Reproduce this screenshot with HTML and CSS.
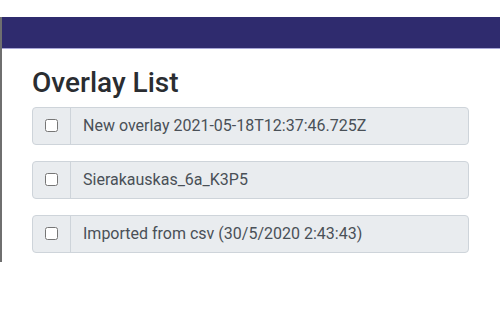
FILE: index.html
```html
<!DOCTYPE html>
<html lang="en">
<head>
    <meta charset="UTF-8">
    <title>Overlay List</title>
    <link rel="stylesheet" href="styles.css">
</head>
<body>
    <div class="frame">
        <div class="navbar"></div>
        <div class="content">
            <h2 class="title">Overlay List</h2>
            <div class="overlay-list">
                <div class="input-group">
                    <div class="addon"><input type="checkbox"></div>
                    <div class="field">New overlay 2021-05-18T12:37:46.725Z</div>
                </div>
                <div class="input-group">
                    <div class="addon"><input type="checkbox"></div>
                    <div class="field">Sierakauskas_6a_K3P5</div>
                </div>
                <div class="input-group">
                    <div class="addon"><input type="checkbox"></div>
                    <div class="field">Imported from csv (30/5/2020 2:43:43)</div>
                </div>
            </div>
        </div>
    </div>
</body>
</html>
```

FILE: styles.css
```css
body {
    margin: 0;
    font-family: Roboto, "Liberation Sans", sans-serif;
    background: #fff;
    color: #212529;
}
.frame {
    margin-top: 17px;
    border-left: 2px solid #6f6f6f;
}
.navbar {
    height: 31px;
    background: #2f2b6e;
    border-bottom: 1px solid #a7a5d6;
}
.content {
    padding: 17px 31px 9px 30px;
}
.title {
    margin: 0 0 7px 0;
    font-size: 28px;
    font-weight: 500;
    line-height: 1.2;
    color: #2a2d31;
}
.overlay-list {
    display: flex;
    flex-direction: column;
    gap: 16px;
}
.input-group {
    display: flex;
    height: 38px;
    box-sizing: border-box;
    border: 1px solid #ced4da;
    border-radius: 4px;
    background: #e9ecef;
}
.addon {
    width: 37px;
    display: flex;
    align-items: center;
    justify-content: center;
    border-right: 1px solid #ced4da;
}
.addon input {
    margin: 0;
    width: 13px;
    height: 13px;
}
.field {
    flex: 1;
    padding: 0 12px;
    display: flex;
    align-items: center;
    font-size: 16px;
    color: #495057;
}
```
